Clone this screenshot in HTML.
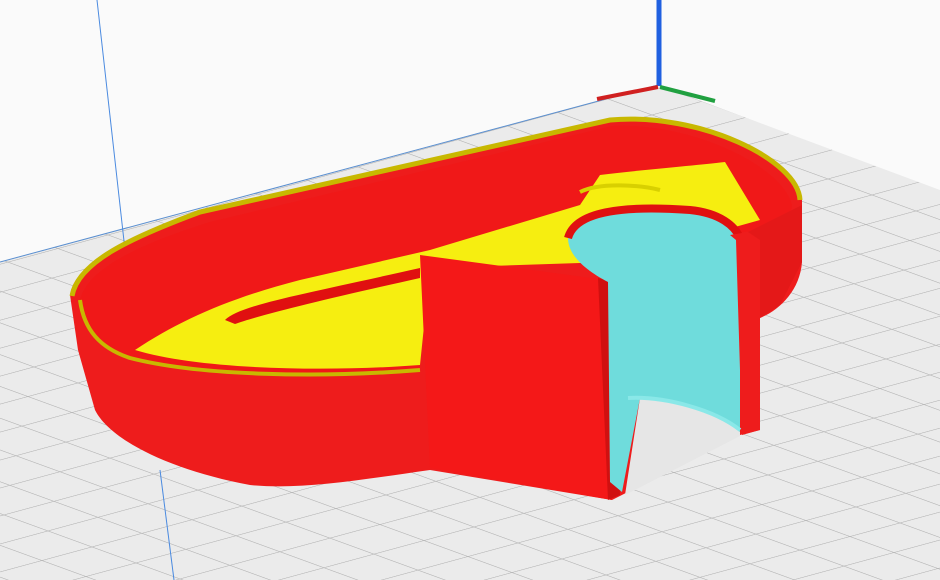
<!DOCTYPE html>
<html><head><style>html,body{margin:0;padding:0;background:#fafafa;}svg{display:block}</style></head>
<body>
<svg width="940" height="580" viewBox="0 0 940 580" xmlns="http://www.w3.org/2000/svg">
<defs>
<pattern id="g" width="40" height="40" patternUnits="userSpaceOnUse" patternTransform="matrix(1.1,0.4,-1.25,0.34,658,85)">
<rect width="40" height="40" fill="#ebebeb"/>
<path d="M0 0H40M0 0V40" stroke="#b8b8b8" stroke-width="1.8" fill="none"/>
</pattern>
</defs>
<rect width="940" height="580" fill="#fafafa"/>
<polygon points="658,85 940,190 940,580 0,580 0,262" fill="url(#g)"/>
<line x1="0" y1="262" x2="658" y2="85" stroke="#5a8fd0" stroke-width="1"/>
<line x1="97" y1="0" x2="125" y2="250" stroke="#4a8ae0" stroke-width="1"/>
<line x1="160" y1="470" x2="174" y2="580" stroke="#4a8ae0" stroke-width="1"/>
<line x1="659" y1="0" x2="659" y2="86" stroke="#2060e0" stroke-width="5"/>
<line x1="597" y1="99" x2="658" y2="87" stroke="#d02020" stroke-width="4"/>
<line x1="660" y1="87" x2="715" y2="101" stroke="#20a040" stroke-width="4"/>
<!-- outer body -->
<path d="M70,295 C75,262 130,238 200,212 L610,120 C700,112 800,160 802,200 L802,262 C800,290 780,310 760,318 L760,430 L740,435 L612,500 L430,470 C360,480 300,490 250,485 C170,470 110,440 95,410 L78,350 Z" fill="#ee1c1c"/>
<!-- inner cavity -->
<path d="M80,300 C88,268 140,244 210,222 L612,126 C690,122 782,165 792,205 C792,215 780,225 760,230 L600,250 L420,255 L420,372 C320,380 200,378 130,358 C100,348 84,325 80,300 Z" fill="#f01818"/>
<!-- rim -->
<path d="M72,296 C78,262 130,238 200,212 L610,120 C700,112 798,160 800,200" fill="none" stroke="#c8b800" stroke-width="5"/>
<path d="M80,300 C84,330 100,348 130,358 C200,376 320,378 420,370" fill="none" stroke="#c8b800" stroke-width="4"/>
<!-- yellow floor -->
<path d="M135,350 C180,320 230,298 300,280 L430,250 L580,205 L600,175 C640,170 700,165 725,162 L760,220 L610,262 L430,268 L420,365 C330,372 200,370 135,350 Z" fill="#f6ee10"/>
<path d="M225,320 C240,305 300,295 420,268 L420,278 C330,298 260,315 235,324 Z" fill="#e01010"/>
<path d="M580,192 C600,182 640,185 660,190" stroke="#d8d000" stroke-width="4" fill="none"/>
<!-- front wall -->
<polygon points="420,255 606,280 612,500 430,468" fill="#f41818"/>
<polygon points="598,278 612,282 620,495 608,500" fill="#d01010"/>
<!-- cylinder -->
<path d="M568,238 C575,212 620,205 690,210 C720,213 735,226 740,238 L740,432 C725,425 700,405 640,398 L622,492 L610,482 L608,282 C585,270 568,255 568,238 Z" fill="#6fdcdc"/>
<path d="M640,398 C690,402 725,420 740,432 L740,436 L625,495 Z" fill="#e6e6e6"/>
<path d="M568,238 C575,212 620,205 690,210 C720,213 735,226 740,238" fill="none" stroke="#e01010" stroke-width="8"/>
<path d="M628,398 C665,396 715,410 740,430" fill="none" stroke="#8ae8e8" stroke-width="4"/>
<polygon points="730,235 748,232 760,240 760,430 742,435 736,240" fill="#ee1c1c"/>
<polygon points="748,232 802,205 802,262 780,305 760,318 760,240" fill="#e41818"/>
</svg>
</body></html>
